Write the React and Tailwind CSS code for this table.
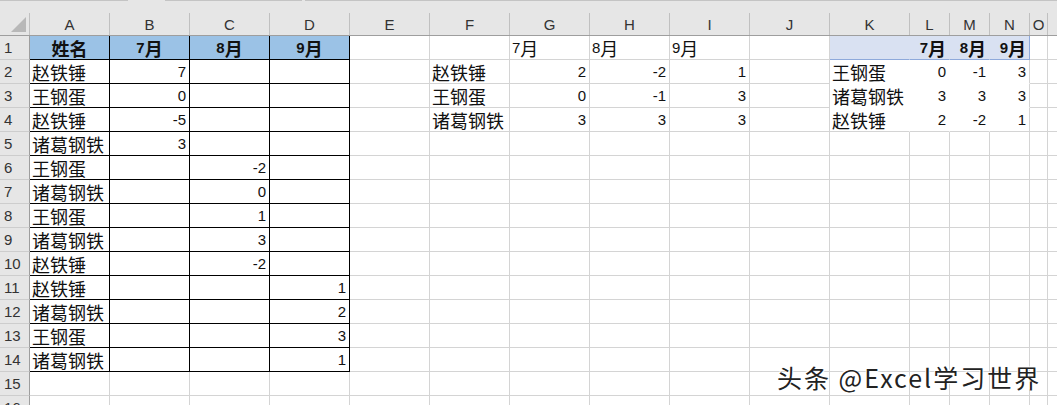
import React from 'react'

const COLS = [
  { k: 'A', w: 'w-[80px]' },
  { k: 'B', w: 'w-[80px]' },
  { k: 'C', w: 'w-[80px]' },
  { k: 'D', w: 'w-[80px]' },
  { k: 'E', w: 'w-[80px]' },
  { k: 'F', w: 'w-[80px]' },
  { k: 'G', w: 'w-[80px]' },
  { k: 'H', w: 'w-[80px]' },
  { k: 'I', w: 'w-[80px]' },
  { k: 'J', w: 'w-[80px]' },
  { k: 'K', w: 'w-[80px]' },
  { k: 'L', w: 'w-[40px]' },
  { k: 'M', w: 'w-[40px]' },
  { k: 'N', w: 'w-[40px]' },
  { k: 'O', w: 'w-[18px]' },
  { k: '', w: 'w-[60px]' },
]

// source table A:D
const src = [
  ['赵铁锤', 7, '', ''],
  ['王钢蛋', 0, '', ''],
  ['赵铁锤', -5, '', ''],
  ['诸葛钢铁', 3, '', ''],
  ['王钢蛋', '', -2, ''],
  ['诸葛钢铁', '', 0, ''],
  ['王钢蛋', '', 1, ''],
  ['诸葛钢铁', '', 3, ''],
  ['赵铁锤', '', -2, ''],
  ['赵铁锤', '', '', 1],
  ['诸葛钢铁', '', '', 2],
  ['王钢蛋', '', '', 3],
  ['诸葛钢铁', '', '', 1],
]

const cells = {}
const put = (ref, v, opts = {}) => { cells[ref] = { v, ...opts } }

put('A1', '姓名', { center: true, bold: true })
put('B1', '7月', { center: true, bold: true })
put('C1', '8月', { center: true, bold: true })
put('D1', '9月', { center: true, bold: true })
src.forEach((r, i) => {
  const row = i + 2
  put('A' + row, r[0])
  ;['B', 'C', 'D'].forEach((c, j) => { if (r[j + 1] !== '') put(c + row, r[j + 1], { right: true }) })
})

put('G1', '7月')
put('H1', '8月')
put('I1', '9月')
;[['赵铁锤', 2, -2, 1], ['王钢蛋', 0, -1, 3], ['诸葛钢铁', 3, 3, 3]].forEach((r, i) => {
  const row = i + 2
  put('F' + row, r[0])
  put('G' + row, r[1], { right: true })
  put('H' + row, r[2], { right: true })
  put('I' + row, r[3], { right: true })
})

put('L1', '7月', { right: true, bold: true })
put('M1', '8月', { right: true, bold: true })
put('N1', '9月', { right: true, bold: true })
;[['王钢蛋', 0, -1, 3], ['诸葛钢铁', 3, 3, 3], ['赵铁锤', 2, -2, 1]].forEach((r, i) => {
  const row = i + 2
  put('K' + row, r[0])
  put('L' + row, r[1], { right: true })
  put('M' + row, r[2], { right: true })
  put('N' + row, r[3], { right: true })
})

const inSrc = (c, r) => 'ABCD'.includes(c) && c !== '' && r >= 1 && r <= 14
const inPivot = (c, r) => 'KLMN'.includes(c) && c !== '' && r >= 1 && r <= 4

// split CJK from latin/digits so each gets its own size
const Txt = ({ s, bold }) => {
  const parts = String(s).split(/([\u4e00-\u9fff]+)/).filter(Boolean)
  return (
    <>
      {parts.map((p, i) =>
        /[\u4e00-\u9fff]/.test(p)
          ? <span key={i} className={`text-[18px] ${bold ? 'font-bold' : ''}`}>{p}</span>
          : <span key={i} className={`text-[15px] font-['Liberation_Sans','Noto_Sans_CJK_SC',sans-serif] ${bold ? 'font-bold' : ''}`}>{p}</span>
      )}
    </>
  )
}

const Cell = ({ col, r }) => {
  const c = col.k
  const cell = cells[c + r]
  let cls = 'border-r border-b border-[#d4d4d4]'
  if (inSrc(c, r)) cls = 'border-r border-b border-black'
  if (inPivot(c, r)) {
    if (r === 1) cls = `border-b border-[#8ea9db] bg-[#d9e1f2] ${c === 'N' ? 'border-r' : 'border-r border-r-[#d9e1f2]'}`
    else if (r === 4) cls = `border-b border-[#d4d4d4] ${c === 'N' ? 'border-r' : 'border-r border-r-white'}`
    else cls = `border-b border-b-white ${c === 'N' ? 'border-r border-r-[#d4d4d4]' : 'border-r border-r-white'}`
  }
  if (r === 1 && inSrc(c, r)) cls += ' bg-[#9bc2e6]'
  let align = 'justify-start pl-[2px]'
  if (cell?.center) align = 'justify-center'
  if (cell?.right) align = 'justify-end pr-[3px]'
  return (
    <div className={`${col.w} shrink-0 h-full flex items-center overflow-visible whitespace-nowrap text-[#111] ${align} ${cls}`}>
      {cell && <Txt s={cell.v} bold={cell.bold} />}
    </div>
  )
}

export default function App() {
  const rows = Array.from({ length: 16 }, (_, i) => i + 1)
  return (
    <div className="relative w-[1057px] h-[405px] overflow-hidden bg-white font-['Noto_Sans_CJK_SC',sans-serif] leading-none">
      {/* top strip */}
      <div className="h-[13px] bg-[#e6e6e6] flex">
        <div className="w-[128px] h-px bg-[#c4c4c4]" />
        <div className="w-[37px] h-px" />
        <div className="w-[137px] h-px bg-[#c4c4c4]" />
        <div className="w-[3px] h-px" />
        <div className="flex-1 h-px bg-[#c4c4c4]" />
      </div>
      {/* column headers */}
      <div className="flex h-[23px] bg-[#e6e6e6] border-b border-[#9e9e9e]">
        <div className="w-[30px] shrink-0 h-full border-r border-[#c0c0c0] relative">
          <div className="absolute right-[3px] bottom-[3px] w-0 h-0 border-l-[15px] border-l-transparent border-b-[15px] border-b-[#b8b8b8]" />
        </div>
        {COLS.map(col => (
          <div key={col.k || 'p'} className={`${col.w} shrink-0 h-full flex items-center justify-center border-r border-[#c0c0c0] text-[15px] text-[#333] font-['Liberation_Sans',sans-serif]`}>
            {col.k}
          </div>
        ))}
      </div>
      {rows.map(r => (
        <div key={r} className="flex h-[24px]">
          <div className="w-[30px] shrink-0 h-full bg-[#e6e6e6] border-r border-r-[#9e9e9e] border-b border-b-[#cdcdcd] flex items-center pl-[4px] text-[15px] text-[#333] font-['Liberation_Sans',sans-serif]">
            {r}
          </div>
          {COLS.map(col => <Cell key={col.k || 'p'} col={col} r={r} />)}
        </div>
      ))}
      <div className="absolute left-[777px] top-[365px] text-[25px] tracking-[2px] text-[#222] font-['Noto_Sans_CJK_SC',sans-serif] whitespace-nowrap [text-shadow:-1px_-1px_0_#fff,1px_1px_1px_#fff]">
        头条 @Excel学习世界
      </div>
    </div>
  )
}
